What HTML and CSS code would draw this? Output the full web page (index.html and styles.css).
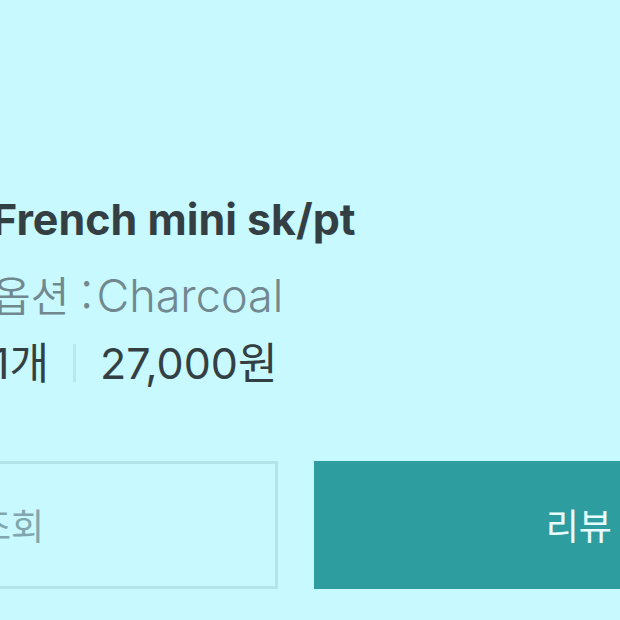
FILE: index.html
```html
<!DOCTYPE html>
<html lang="ko">
<head>
    <meta charset="UTF-8">
    <meta name="viewport" content="width=device-width, initial-scale=1.0">
    <title>French mini sk/pt</title>
    <link rel="stylesheet" href="styles.css">
</head>
<body>

<main class="order">
    <section class="product">
        <h1 class="product-name">French mini sk/pt</h1>
        <p class="product-option">
            <span class="option-label">옵션 :</span>
            <span class="option-value">Charcoal</span>
        </p>
        <p class="product-price">
            <span class="count">1개</span>
            <span class="price">27,000원</span>
        </p>
    </section>

    <div class="actions">
        <button type="button" class="btn btn-track">조회</button>
        <button type="button" class="btn btn-review">리뷰</button>
    </div>
</main>

</body>
</html>
```
FILE: styles.css
```css
* {
    box-sizing: border-box;
}
body {
    margin: 0;
    background-color: #c7f9ff;
    font-family: Inter, "Noto Sans CJK KR", sans-serif;
    color: #343f44;
    overflow: hidden;
}
.order {
    padding-top: 184px;
}
.product {
    margin-left: -8px;
}
.product-name {
    margin: 0;
    font-size: 43px;
    line-height: 70px;
    font-weight: 700;
    white-space: nowrap;
}
.product-option {
    display: flex;
    align-items: baseline;
    gap: 4px;
    margin: 0;
    padding-top: 6px;
    font-size: 45px;
    line-height: 68px;
    font-weight: 350;
    color: #71888e;
    white-space: nowrap;
}
.option-label {
    font-family: "Noto Sans CJK KR", sans-serif;
    font-size: 42px;
}
.product-price {
    display: flex;
    align-items: center;
    margin: 0;
    font-size: 43px;
    line-height: 66px;
    font-weight: 400;
    white-space: nowrap;
}
.count {
    padding-right: 24px;
}
.price {
    display: flex;
    align-items: center;
}
.price::before {
    content: "";
    width: 3px;
    height: 38px;
    margin-right: 24px;
    background-color: #b8e9ed;
}
.actions {
    display: grid;
    grid-template-columns: 278fr 306fr;
    gap: 36px;
    padding-top: 65px;
}
.btn {
    height: 128px;
    border: 3px solid #b4e5ea;
    border-radius: 0;
    background-color: transparent;
    font-family: "Noto Sans CJK KR", sans-serif;
    font-size: 36px;
    font-weight: 400;
    white-space: nowrap;
    cursor: pointer;
}
.btn-track {
    padding: 0 0 2px;
    border-left: none;
    color: #82a6ad;
    text-align: left;
    text-indent: -22px;
}
.btn-review {
    padding: 0 8px 2px;
    border: none;
    background-color: #2e9da0;
    color: #e8fdff;
    text-align: right;
}
```
